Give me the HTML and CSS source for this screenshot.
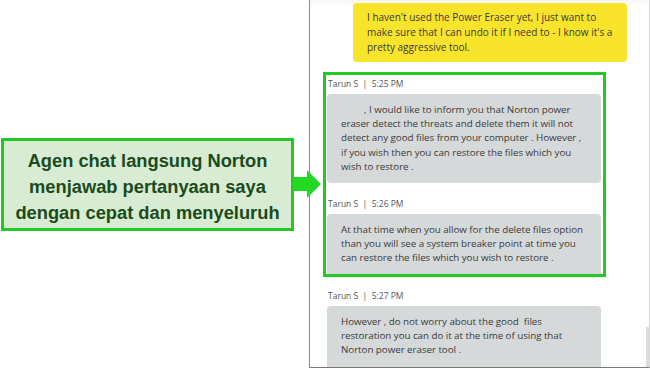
FILE: index.html
```html
<!DOCTYPE html>
<html lang="id">
<head>
  <meta charset="UTF-8" />
  <meta name="viewport" content="width=device-width, initial-scale=1.0" />
  <title>Norton live chat</title>
  <link rel="stylesheet" href="styles.css">
</head>
<body>
  <div class="page">
    <div class="side">
      <div class="callout">
        Agen chat langsung Norton<br>
        menjawab pertanyaan saya<br>
        dengan cepat dan menyeluruh
      </div>
    </div>

    <svg class="arrow" width="28" height="28" viewBox="0 0 28 28">
      <polygon points="0,7 14,7 14,0 28,14 14,28 14,21 0,21" fill="#22d822" />
    </svg>

    <div class="chat">
      <div class="msg-user">
        I haven't used the Power Eraser yet, I just want to make sure that I can undo it if I need to - I know it's a pretty aggressive tool.
      </div>

      <div class="highlight">
        <div class="meta">Tarun S &nbsp;|&nbsp; 5:25 PM</div>
        <div class="msg-agent indent">, I would like to inform you that Norton power eraser detect the threats and delete them it will not detect any good files from your computer . However , if you wish then you can restore the files which you wish to restore .</div>

        <div class="meta">Tarun S &nbsp;|&nbsp; 5:26 PM</div>
        <div class="msg-agent last">At that time when you allow for the delete files option than you will see a system breaker point at time you can restore the files which you wish to restore .</div>
      </div>

      <div class="plain">
        <div class="meta">Tarun S &nbsp;|&nbsp; 5:27 PM</div>
        <div class="msg-agent tail">However , do not worry about the good &nbsp;files restoration you can do it at the time of using that Norton power eraser tool .</div>
      </div>

      <div class="scroll-thumb"></div>
    </div>
  </div>
</body>
</html>
```

FILE: styles.css
```css
html, body {
  margin: 0;
  padding: 0;
  background-color: #fff;
}
.page {
  position: relative;
  display: flex;
  width: 650px;
  height: 368px;
}
.side {
  width: 309px;
  flex-shrink: 0;
  padding: 138px 0 0 1px;
  box-sizing: border-box;
}
.callout {
  width: 293px;
  height: 93px;
  box-sizing: border-box;
  border: 3px solid #27c627;
  background-color: #d7ecd3;
  color: #1b4a1b;
  font-family: "Liberation Sans", Arial, sans-serif;
  font-weight: bold;
  font-size: 18.3px;
  line-height: 26px;
  text-align: center;
  padding-top: 7px;
  white-space: nowrap;
}
.arrow {
  position: absolute;
  left: 293px;
  top: 170px;
  z-index: 2;
}
.chat {
  position: relative;
  flex: 1;
  border-left: 1px solid #8c8c8c;
  border-bottom: 1px solid #7a7a7a;
  border-right: 1px solid #d8d8d8;
  overflow: hidden;
  font-family: "Open Sans", sans-serif;
  color: #3a3a3a;
  box-shadow: inset 0 6px 8px -6px rgba(0,0,0,0.08);
}
.msg-user {
  margin: 3px 22px 0 43px;
  padding: 7px 12px 7px 14px;
  background-color: #f9e42c;
  border-radius: 4px;
  font-size: 10px;
  line-height: 15px;
}
.highlight {
  margin: 10px 43px 0 13px;
  border: 3px solid #22c922;
  padding: 0 2px 0 1px;
}
.plain {
  margin: 10px 0 0 17px;
  width: 274px;
}
.meta {
  font-size: 8.5px;
  line-height: 14px;
  color: #555;
  padding: 2px 0 3px 1px;
}
.highlight .meta + .msg-agent + .meta {
  margin-top: 12px;
}
.msg-agent {
  background-color: #d6d9d9;
  border-radius: 4px;
  padding: 9px 14px 9px 14px;
  font-size: 9.8px;
  letter-spacing: -0.05px;
  line-height: 14.2px;
}
.msg-agent.indent {
  text-indent: 23px;
}
.msg-agent.last {
  padding-bottom: 8px;
  border-radius: 4px 4px 0 0;
}
.msg-agent.tail {
  padding-bottom: 14px;
}
.scroll-thumb {
  position: absolute;
  right: 0;
  bottom: 0;
  width: 3px;
  height: 40px;
  background-color: #dcdcdc;
}
```
